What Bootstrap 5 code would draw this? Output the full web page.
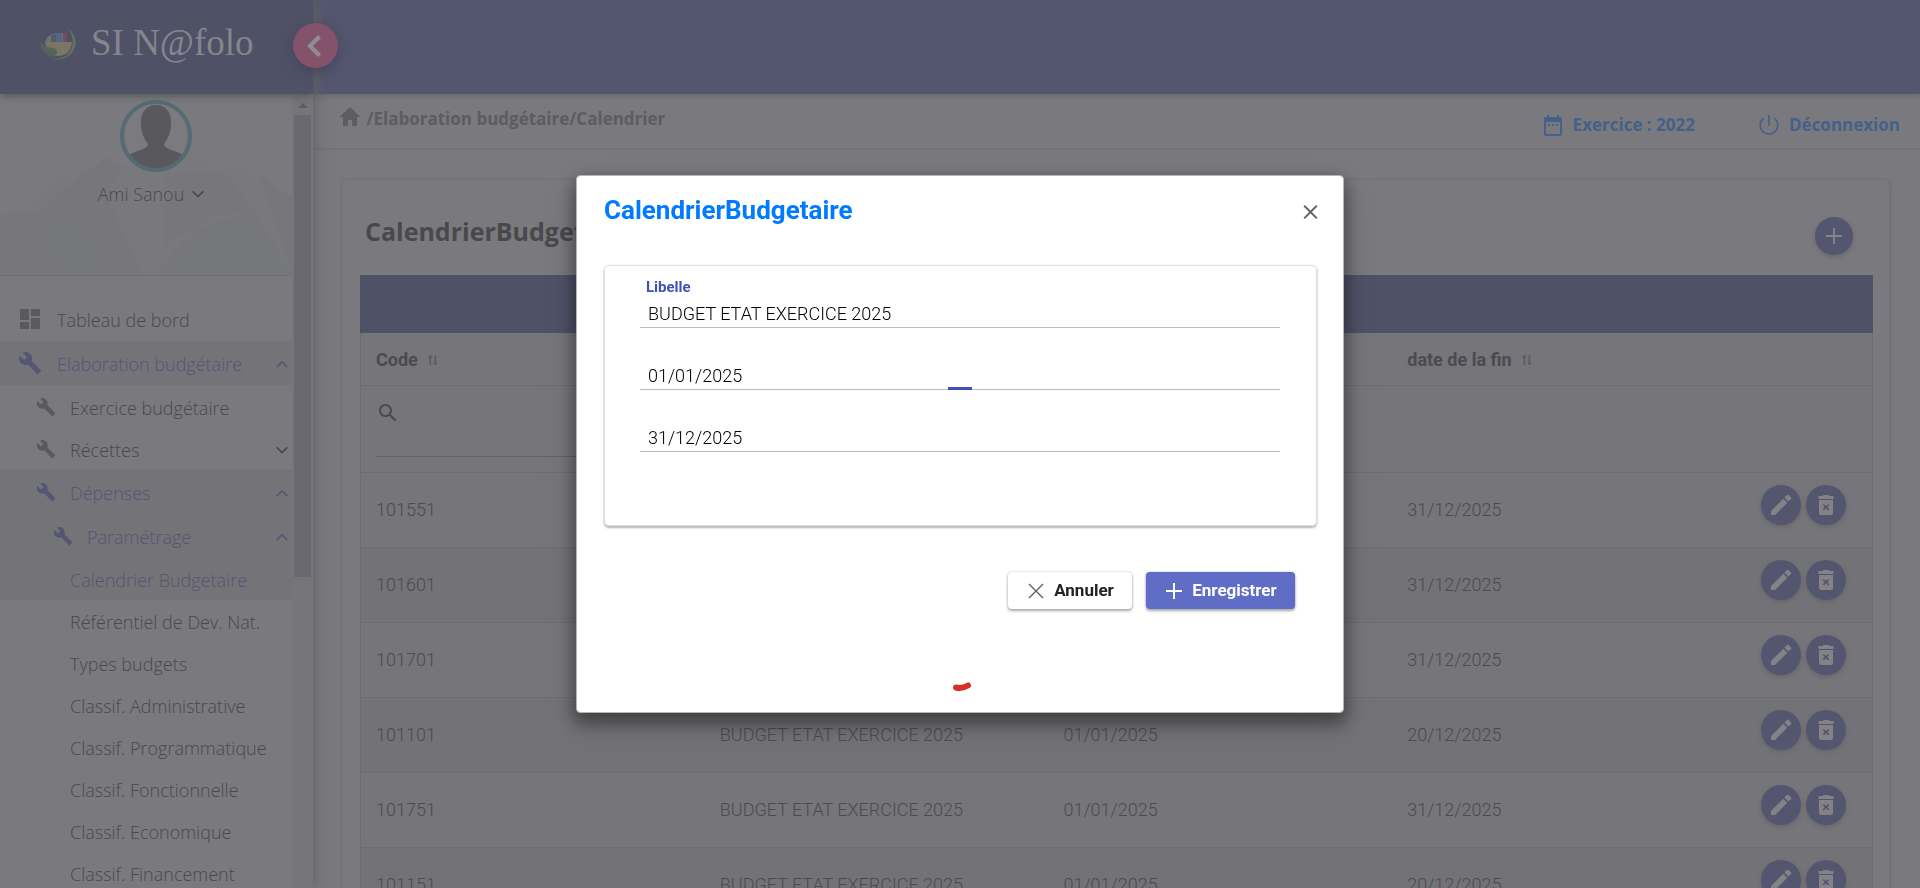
<!DOCTYPE html>
<html lang="fr">
<head>
<meta charset="utf-8">
<meta name="viewport" content="width=device-width, initial-scale=1">
<title>SI N@folo</title>
<link href="https://cdn.jsdelivr.net/npm/bootstrap@5.3.0/dist/css/bootstrap.min.css" rel="stylesheet">
<style>
:root{--page:#7a797e;--ink:#49494d;--blue:#54566f;--navy:#4f5167;--line:#6d6c71;--link:#446189;--seg:"Open Sans","Noto Sans",sans-serif;--rob:Roboto,"Liberation Sans",sans-serif}
body{background:var(--page);font-family:var(--seg);font-size:18px;color:var(--ink)}
a{color:inherit;text-decoration:none}
button{border:0;padding:0}
svg{fill:currentColor;flex:none}
.i20{width:20px;height:20px}.i24{width:24px;height:24px}
/* side bar */
.side{width:313px;z-index:2;box-shadow:3px 0 14px #66656b}
.brand{height:94px;background:var(--navy);padding-left:40px;gap:15px;box-shadow:0 2px 8px #55565c;z-index:1}
.brand-name{font:37px/48px "Liberation Serif",serif;color:#85858b}
.side-toggle{left:293px;top:23px;width:45px;height:45px;background:#84526a;color:#8e8d92;z-index:3;box-shadow:0 4px 14px #44465a}
.user{height:182px;border-bottom:1px solid #6f6e73;padding-top:6px}
.avatar{width:72px;height:72px;margin-left:20px}
.user-name{font-weight:300;line-height:26px;margin-top:9px;margin-left:14px}
.hills{left:0;bottom:0;width:100%;height:122px}
.menu{padding-top:21px;font-weight:300}
.menu a{height:42px;gap:14px;padding-top:2px}
.menu a.lvl1{height:44px;padding-left:18px;gap:15px}
.menu a.open{height:44px}
.menu a.lvl2{padding-left:36px}
.menu a.lvl3{padding-left:53px;gap:14px}
.menu a.leaf{padding-left:70px}
.menu ul{padding-top:1px}
.menu .hot{color:#545672}
.menu .shade{background:#747378}
.menu svg:first-child{color:#59595e;margin-bottom:2px}
.menu .hot svg:first-child{color:#545672}
.sbar{width:21px;background:#767579;color:#5e5d62}
.sthumb{width:17px;height:462px;background:#6a696f}
/* content */
.topband{height:94px;background:var(--blue);z-index:1;box-shadow:0 1px 5px #65646b}
.crumbs{height:56px;border-bottom:2px solid #737277;padding:0 20px 0 25px;font-size:17px;font-weight:700;color:#5c5c61}
.crumbs .acts{color:var(--link);gap:62px;padding-top:8px}
.panel{margin:29px 30px 0 28px;border:1px solid #737277;border-radius:5px;padding:0 16px 0 18px;box-shadow:1px 1px 3px #727176}
.panel-title{font-size:25px;font-weight:700;height:95px;padding:9px 20px 0 5px}
.round{border-radius:50%;background:var(--blue);color:#838287;box-shadow:0 2px 4px #66656c}
.add{width:38px;height:38px;margin-top:28px}
.band{height:58px;background:var(--navy)}
.grid{width:100%;table-layout:fixed;border-collapse:separate;border-spacing:0;border:1px solid var(--line);border-top:0;font-family:var(--rob);color:#4b4b4f}
.grid td,.grid th{padding:0 15px;border-bottom:1px solid var(--line);vertical-align:middle}
.grid th{height:53px;font-weight:700;font-size:18px;background:#767579}
.grid th svg{margin-left:5px;color:#5b5b60}
.grid .filter td{height:87px;background:#767579}
.grid .rowd td{height:75px;font-size:18px;font-weight:300;background:#767579;padding-bottom:2px}
.grid .rowd:nth-child(odd) td{background:#737277}
.grid .c4{width:9%}
.findbox{height:56px;border-bottom:1px solid #646469}
.findbox input{background:none;border:0;outline:0;width:100%;min-width:0}
.grid .ops{gap:5px;padding:0 2px 8px 0}
.ops .round{width:40px;height:40px}
/* dialog */
.dlg{width:40%;max-width:none;margin:175px auto 0;font-family:var(--rob);color:#000}
.dlg .modal-content{border:1px solid #b5b5b5;border-radius:4px;height:538px;box-shadow:0 8px 16px 3px rgba(0,0,0,.38),0 14px 40px rgba(0,0,0,.1);padding:0 26px 0 27px}
.dlg-title{color:#007bff;font-size:26px;font-weight:700;line-height:34px;margin-top:17px}
.closer{background:none;color:#666;margin:22px -1px 0 0}
.sheet{height:261px;margin-top:38px;border:1px solid #ddd;border-radius:5px;padding:12px 36px 0 35px;box-shadow:0 2px 2px #bbb,0 1px 3px #ddd}
.field{height:62px;border:0;border-bottom:1px solid #bbb;position:relative}
.field:first-child{height:50px}
.field label{color:#3f51b5;font-weight:700;font-size:15px;line-height:19px;padding-left:6px}
.field input{border:0;outline:0;background:none;width:100%;height:30px;padding:2px 8px 0;font-size:18px;font-weight:300;color:#000}
.field .dash{position:absolute;left:50%;bottom:-1px;width:24px;height:3px;margin-left:-12px;background:#3f51b5}
.foot{margin-top:46px;padding-right:22px;gap:14px}
.foot button{height:37px;border-radius:4px;font-size:17px;font-weight:700;box-shadow:0 2px 3px #aaa,0 0 2px #bbb;gap:8px}
.b-no{width:124px;background:#fff;color:#222}.b-no svg{color:#666}
.b-ok{width:149px;background:#5f6dc6;color:#fff}
.spin{width:20px;height:10px;margin:73px 0 0 348px}
</style>
</head>
<body>
<svg class="d-none" xmlns="http://www.w3.org/2000/svg">
<symbol id="wrench" viewBox="0 0 24 24"><path d="M22.7 19l-9.1-9.1c.9-2.3.4-5-1.5-6.900-2-2-5-2.400-7.400-1.300L9 6 6 9 1.600 4.700C.4 7.100.9 10.100 2.900 12.100c1.900 1.900 4.600 2.400 6.900 1.500l9.100 9.100c.4.4 1 .4 1.400 0l2.300-2.300c.5-.4.5-1.100.1-1.400z"/></symbol>
<symbol id="dash" viewBox="0 0 24 24"><path d="M2 13h9V2H2v11zm0 9h9v-7H2v7zm11 0h9V11h-9v11zm0-20v7h9V2h-9z"/></symbol>
<symbol id="up" viewBox="0 0 24 24"><path d="M12 8l-7 7 1.410 1.410L12 10.830l5.590 5.580L19 15z"/></symbol>
<symbol id="down" viewBox="0 0 24 24"><path d="M17.590 8.090L12 13.670 6.410 8.090 5 9.500l7 7 7-7z"/></symbol>
<symbol id="home" viewBox="0 0 24 24"><path d="M10 21v-6h4v6h5v-9h3.500L12 2 1.500 12H5v9z"/></symbol>
<symbol id="cal" viewBox="0 0 24 24"><path d="M9 11H7v2h2v-2zm4 0h-2v2h2v-2zm4 0h-2v2h2v-2zm2-7h-1V2h-2v2H8V2H6v2H5c-1.110 0-2 .9-2 2v15c0 1.100.89 2 2 2h14c1.100 0 2-.9 2-2V6c0-1.100-.9-2-2-2zm0 17H5V9h14v12z"/></symbol>
<symbol id="power" viewBox="0 0 24 24"><path d="M11.200 2h1.600v11h-1.600zM17.800 4.600l-1 1.200a8 8 0 1 1-9.600 0l-1-1.200a9.600 9.600 0 1 0 11.600 0z"/></symbol>
<symbol id="plus" viewBox="0 0 20 20"><path d="M9 2h2v7h7v2h-7v7H9v-7H2V9h7z"/></symbol>
<symbol id="sort" viewBox="0 0 14 14"><path d="M3 13V4H1l3-4 3 4H5v9zM9 1h2v9h2l-3 3-3-3h2z" transform="scale(.9)"/></symbol>
<symbol id="find" viewBox="0 0 24 24"><path d="M15.500 14h-.79l-.28-.27C15.410 12.590 16 11.110 16 9.500 16 5.910 13.090 3 9.500 3S3 5.910 3 9.500 5.910 16 9.500 16c1.610 0 3.090-.59 4.230-1.570l.27.28v.79l5 4.990L20.490 19l-4.990-5zm-6 0C7.010 14 5 11.990 5 9.500S7.010 5 9.500 5 14 7.010 14 9.500 11.990 14 9.500 14z"/></symbol>
<symbol id="pen" viewBox="0 0 24 24"><path d="M2 18v4h4L18.300 9.700l-4-4zM22 6a1.200 1.200 0 0 0 0-1.600l-2.400-2.400a1.200 1.200 0 0 0-1.600 0l-2.600 2.600 4 4z"/></symbol>
<symbol id="bin" viewBox="0 0 24 24"><path fill-rule="evenodd" d="M4.500 3h4l1-1h5l1 1h4v3h-15zM5 7h14v13a2 2 0 0 1-2 2H7a2 2 0 0 1-2-2zm3.500 4.500l2 2.500-2 3h2l1.500-2 1.500 2h2l-2-3 2-2.500h-2L12 13l-1.500-1.500z"/></symbol>
<symbol id="cross" viewBox="0 0 16 16"><path d="M1.500.5L8 7l6.500-6.500 1 1L9 8l6.500 6.500-1 1L8 9l-6.500 6.500-1-1L7 8 .5 1.500z"/></symbol>
<symbol id="close" viewBox="0 0 16 16"><path d="M2 .5l6 6 6-6L15.500 2l-6 6 6 6-1.500 1.500-6-6-6 6L.5 14l6-6-6-6z"/></symbol>
</svg>

<div class="d-flex vh-100 overflow-hidden position-relative">
  <aside class="side d-flex flex-column flex-shrink-0 position-relative">
    <a href="#" class="brand d-flex align-items-center flex-shrink-0 position-relative pb-2">
      <svg width="36" height="36" viewBox="0 0 36 36"><path d="M5 17c2-6 5-7 11-9l11 1v8z" fill="#6d7277"/><path d="M11 10h4v7h-4zM14 9h3v8h-3z" fill="#565a62"/><path d="M16 8h6v9h-6z" fill="#4f6b83"/><path d="M23 4l4 5v8h-4z" fill="#744b5c"/><path d="M5 17h27c-1 9-6 14-14 14S6 26 5 17z" fill="#7b7565"/><path d="M0 16c5 9 16 5 17 10 1 3-3 5-5 6C4 30 0 24 0 16z" fill="#526558"/><path d="M28 3c6 5 9 12 7 19-3 10-12 14-24 12 11 0 18-3 21-12 2-7 0-13-4-19z" fill="#657060"/></svg>
      <span class="brand-name">SI N@folo</span>
    </a>
    <button class="side-toggle position-absolute rounded-circle d-flex align-items-center justify-content-center" aria-label="Réduire le menu"><svg class="me-1" width="18" height="26" viewBox="0 0 18 26"><path d="M13 2l3 3-8 8 8 8-3 3L2 13z"/></svg></button>
    <div class="d-flex flex-grow-1 overflow-hidden">
      <div class="flex-grow-1">
        <div class="user position-relative d-flex flex-column align-items-center">
          <svg class="hills position-absolute" viewBox="0 0 292 122" preserveAspectRatio="none"><path d="M0 61l24-2 36-37 32-5 14-13 12 9 40-10 18 5 22-5 20 18 24-10 20 20 30 14v77H0z" fill="#79787d"/><path d="M0 62l38-2 46-40 22-15 18 10-20 25 40 82H0zM164 20l60-2 30 40-40 5-50 30zM260 22l32 24v76z" fill="#77767b"/><path d="M36 56l48 15 20 50H60zM154 122l40-45 60-20 38 65z" fill="#76777b"/></svg>
          <svg class="avatar position-relative" viewBox="0 0 72 72"><circle cx="36" cy="36" r="34" fill="#7b7a7e"/><path d="M36 5c-10 0-16 8-15 19 0 9 4 16 7 20 0 6-13 6-21 12 6 9 17 13 29 13s23-4 29-13c-8-6-21-6-21-12 3-4 7-11 7-20C52 13 46 5 36 5z" fill="#59585d"/><circle cx="36" cy="36" r="34" fill="none" stroke="#556a74" stroke-width="4"/></svg>
          <a href="#" class="user-name position-relative d-flex align-items-center gap-1">Ami Sanou<svg class="i20"><use href="#down"/></svg></a>
        </div>
        <ul class="menu list-unstyled m-0">
          <li><a href="#" class="lvl1 d-flex align-items-center"><svg class="i24"><use href="#dash"/></svg>Tableau de bord</a></li>
          <li><a href="#" class="lvl1 open hot shade d-flex align-items-center"><svg class="i24"><use href="#wrench"/></svg>Elaboration budgétaire<svg class="i20 ms-auto"><use href="#up"/></svg></a>
            <ul class="list-unstyled">
              <li><a href="#" class="lvl2 d-flex align-items-center"><svg class="i20"><use href="#wrench"/></svg>Exercice budgétaire</a></li>
              <li><a href="#" class="lvl2 d-flex align-items-center"><svg class="i20"><use href="#wrench"/></svg>Récettes<svg class="i20 ms-auto"><use href="#down"/></svg></a></li>
              <li><a href="#" class="lvl2 open hot shade d-flex align-items-center"><svg class="i20"><use href="#wrench"/></svg>Dépenses<svg class="i20 ms-auto"><use href="#up"/></svg></a></li>
              <li><a href="#" class="lvl3 open hot shade d-flex align-items-center"><svg class="i20"><use href="#wrench"/></svg>Paramétrage<svg class="i20 ms-auto"><use href="#up"/></svg></a></li>
              <li><a href="#" class="leaf hot shade d-flex align-items-center">Calendrier Budgetaire</a></li>
              <li><a href="#" class="leaf d-flex align-items-center">Référentiel de Dev. Nat.</a></li>
              <li><a href="#" class="leaf d-flex align-items-center">Types budgets</a></li>
              <li><a href="#" class="leaf d-flex align-items-center">Classif. Administrative</a></li>
              <li><a href="#" class="leaf d-flex align-items-center">Classif. Programmatique</a></li>
              <li><a href="#" class="leaf d-flex align-items-center">Classif. Fonctionnelle</a></li>
              <li><a href="#" class="leaf d-flex align-items-center">Classif. Economique</a></li>
              <li><a href="#" class="leaf d-flex align-items-center">Classif. Financement</a></li>
            </ul>
          </li>
        </ul>
      </div>
      <div class="sbar d-flex flex-column align-items-center flex-shrink-0"><svg width="10" height="21" viewBox="0 0 10 21"><path d="M0 14l5-5 5 5z"/></svg><div class="sthumb"></div></div>
    </div>
  </aside>

  <main class="flex-grow-1 d-flex flex-column" style="min-width:0">
    <div class="topband flex-shrink-0 position-relative"></div>
    <nav class="crumbs d-flex justify-content-between flex-shrink-0" aria-label="Fil d'Ariane">
      <div class="d-flex align-items-center pb-1"><a href="#" aria-label="Accueil"><svg class="i24 mb-1"><use href="#home"/></svg></a><span>&nbsp;/<a href="#">Elaboration budgétaire</a>/<a href="#">Calendrier</a></span></div>
      <div class="acts d-flex align-items-center">
        <a href="#" class="d-flex align-items-center gap-2"><svg class="i24"><use href="#cal"/></svg>Exercice : 2022</a>
        <a href="#" class="d-flex align-items-center gap-2"><svg class="i24"><use href="#power"/></svg>Déconnexion</a>
      </div>
    </nav>
    <section class="panel">
      <div class="panel-title d-flex justify-content-between"><span class="mt-4">CalendrierBudgetaire</span><button class="round add d-flex align-items-center justify-content-center" aria-label="Ajouter"><svg class="i20"><use href="#plus"/></svg></button></div>
      <div class="band"></div>
      <table class="grid">
        <thead><tr><th>Code <svg width="13" height="14"><use href="#sort"/></svg></th><th>Libelle</th><th>date de début</th><th>date de la fin <svg width="13" height="14"><use href="#sort"/></svg></th><th class="c4"></th></tr></thead>
        <tbody id="rows">
          <tr class="filter"><td><div class="findbox d-flex align-items-start"><svg class="i24"><use href="#find"/></svg><input type="text" aria-label="Filtrer par code"></div></td><td></td><td></td><td></td><td></td></tr>
        </tbody>
      </table>
    </section>
  </main>
</div>

<div class="modal d-block" role="dialog" aria-labelledby="dlgTitle">
  <div class="modal-dialog dlg">
    <div class="modal-content">
      <div class="d-flex justify-content-between align-items-start"><h1 class="dlg-title mb-0" id="dlgTitle">CalendrierBudgetaire</h1><button class="closer" aria-label="Fermer"><svg class="d-block" width="15" height="28" viewBox="0 0 16 16"><use href="#close"/></svg></button></div>
      <form class="sheet">
        <div class="field"><label class="d-block" for="lib">Libelle</label><input class="d-block" id="lib" value="BUDGET ETAT EXERCICE 2025"></div>
        <div class="field d-flex align-items-end"><input aria-label="Date de début" value="01/01/2025"><span class="dash"></span></div>
        <div class="field d-flex align-items-end"><input aria-label="Date de la fin" value="31/12/2025"></div>
      </form>
      <div class="foot d-flex justify-content-end">
        <button class="b-no d-flex align-items-center justify-content-center"><svg width="20" height="16" viewBox="0 0 16 16"><use href="#cross"/></svg>Annuler</button>
        <button class="b-ok d-flex align-items-center justify-content-center"><svg class="i20"><use href="#plus"/></svg>Enregistrer</button>
      </div>
      <svg class="spin" viewBox="0 0 20 10"><path d="M4 5.500q6 1.500 12-2" fill="none" stroke="#d93025" stroke-width="6" stroke-linecap="round"/></svg>
    </div>
  </div>
</div>
<script src="https://cdn.jsdelivr.net/npm/bootstrap@5.3.0/dist/js/bootstrap.bundle.min.js"></script>
<script>
const items = [
  ["101551","31/12/2025"],["101601","31/12/2025"],["101701","31/12/2025"],
  ["101101","20/12/2025"],["101751","31/12/2025"],["101151","20/12/2025"]
];
document.getElementById("rows").insertAdjacentHTML("beforeend", items.map(([code, end]) => `
  <tr class="rowd"><td>${code}</td><td>BUDGET ETAT EXERCICE 2025</td><td>01/01/2025</td><td>${end}</td>
  <td class="c4"><div class="ops d-flex justify-content-center">
    <button class="round d-flex align-items-center justify-content-center" aria-label="Modifier"><svg class="i24"><use href="#pen"/></svg></button>
    <button class="round d-flex align-items-center justify-content-center" aria-label="Supprimer"><svg class="i24"><use href="#bin"/></svg></button>
  </div></td></tr>`).join(""));
</script>
</body>
</html>
